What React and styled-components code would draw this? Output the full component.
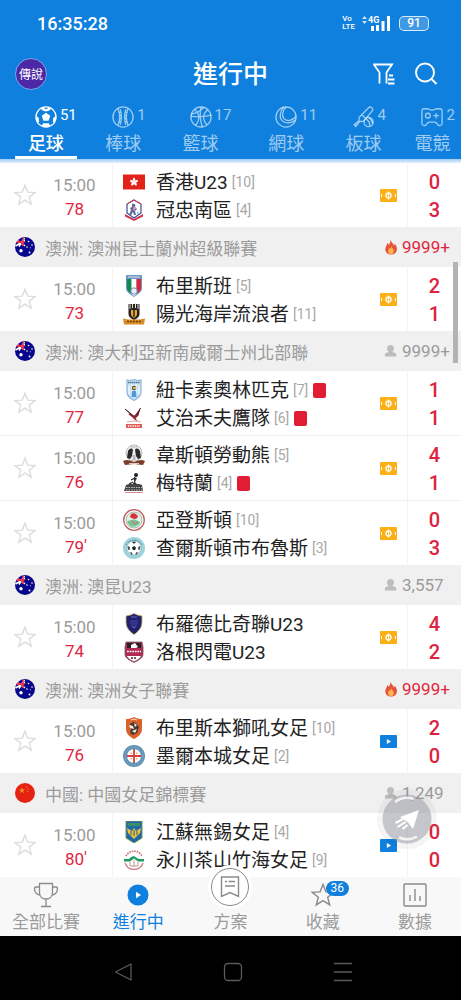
import React from "react";
import styled, { createGlobalStyle } from "styled-components";

const GlobalStyle = createGlobalStyle`
    * {
        box-sizing: border-box;
    }

    body {
        margin: 0;
        background: #fff;
        font-family: Roboto, "Noto Sans CJK TC", sans-serif;
    }

    a {
        color: inherit;
        text-decoration: none;
    }

    svg {
        display: block;
        flex: none;
    }
`;

/* ---------- data ---------- */

const sports = [
    { id: "soccer", label: "足球", count: 51, active: true },
    { id: "baseball", label: "棒球", count: 1 },
    { id: "basketball", label: "籃球", count: 17 },
    { id: "tennis", label: "網球", count: 11 },
    { id: "cricket", label: "板球", count: 4 },
    { id: "esports", label: "電競", count: 2 },
];

const sections = [
    {
        id: "hk",
        matches: [
            {
                minute: "78",
                home: { name: "香港U23", rank: 10, crest: "hongkong", goals: 0 },
                away: { name: "冠忠南區", rank: 4, crest: "southern", goals: 3 },
            },
        ],
    },
    {
        id: "qld",
        league: "澳洲: 澳洲昆士蘭州超級聯賽",
        flag: "au",
        viewers: "9999+",
        hot: true,
        matches: [
            {
                minute: "73",
                home: { name: "布里斯班", rank: 5, crest: "azzurri", goals: 2 },
                away: { name: "陽光海岸流浪者", rank: 11, crest: "wanderers", goals: 1 },
            },
        ],
    },
    {
        id: "nnsw",
        league: "澳洲: 澳大利亞新南威爾士州北部聯",
        flag: "au",
        viewers: "9999+",
        matches: [
            {
                minute: "77",
                home: { name: "紐卡素奧林匹克", rank: 7, crest: "olympic", goals: 1, red: true },
                away: { name: "艾治禾夫鷹隊", rank: 6, crest: "eagles", goals: 1, red: true },
            },
            {
                minute: "76",
                home: { name: "韋斯頓勞動熊", rank: 5, crest: "bears", goals: 4 },
                away: { name: "梅特蘭", rank: 4, crest: "maitland", goals: 1, red: true },
            },
            {
                minute: "79",
                tick: true,
                home: { name: "亞登斯頓", rank: 10, crest: "rosebud", goals: 0 },
                away: { name: "查爾斯頓市布魯斯", rank: 3, crest: "blues", goals: 3 },
            },
        ],
    },
    {
        id: "u23",
        league: "澳洲: 澳昆U23",
        flag: "au",
        viewers: "3,557",
        matches: [
            {
                minute: "74",
                home: { name: "布羅德比奇聯U23", crest: "broadbeach", goals: 4 },
                away: { name: "洛根閃電U23", crest: "logan", goals: 2 },
            },
        ],
    },
    {
        id: "aw",
        league: "澳洲: 澳洲女子聯賽",
        flag: "au",
        viewers: "9999+",
        hot: true,
        matches: [
            {
                minute: "76",
                live: true,
                home: { name: "布里斯本獅吼女足", rank: 10, crest: "roar", goals: 2 },
                away: { name: "墨爾本城女足", rank: 2, crest: "city", goals: 0 },
            },
        ],
    },
    {
        id: "cn",
        league: "中國: 中國女足錦標賽",
        flag: "cn",
        viewers: "1,249",
        matches: [
            {
                minute: "80",
                tick: true,
                live: true,
                home: { name: "江蘇無錫女足", rank: 4, crest: "wuxi", goals: 0 },
                away: { name: "永川茶山竹海女足", rank: 9, crest: "yongchuan", goals: 0 },
            },
        ],
    },
];

/* ---------- icons ---------- */

const STAR = "M12 2.2l2.7 6.9 7.3.4-5.7 4.6 1.9 7.1-6.2-4-6.2 4 1.9-7.1L2 9.5l7.3-.4z";

const sportIcons = {
    soccer: (
        <>
            <circle cx="12" cy="12" r="11" />
            <path
                d="M12 7.4l4.6 3.3-1.8 5.3H9.2l-1.8-5.3zM8.6 1.6L12 3.6l3.4-2 2 1-1.6 2.2-3.800 1.2-3.800-1.2-1.6-2.200zM1.2 10.500l2.800 2.300.4 4.600-2 .6zM22.800 10.500L20 12.800l-.4 4.600 2 .6zM9 18.700h6l1.800 2.800-3.200 1.400h-3.200l-3.200-1.400z"
                fill="currentColor"
                stroke="none"
            />
        </>
    ),
    baseball: (
        <>
            <circle cx="12" cy="12" r="11" />
            <path d="M6.5 3c2.600 5 2.600 13 0 18M17.500 3c-2.600 5-2.600 13 0 18M9 3.500c1.600 5.500 1.600 11.500 0 17M15 3.500c-1.600 5.500-1.600 11.500 0 17M6.800 7h3.600M7.400 10.300h3.200M7.400 13.700h3.200M6.800 17h3.600M13.600 7h3.600M13.400 10.300h3.200M13.400 13.700h3.200M13.600 17h3.600" />
        </>
    ),
    basketball: (
        <>
            <circle cx="12" cy="12" r="11" />
            <path d="M12 1c-1.200 6-1.200 15 1.500 22M1 11c7 1.500 14 1 22-1M5 3.700c5.600 4.300 6.400 11 1 17.600M19.500 4.200c-5.500 4-6.500 10.500-1 16.300M1.600 8.500c5-.5 10-2.500 13.400-7" />
        </>
    ),
    tennis: (
        <>
            <circle cx="12" cy="12" r="11" />
            <path d="M12.500 1C8 4.500 7 11 10 14c3.300 3.200 9 2 13-2.500M9.500 1.400C5 6 4.500 13 8 16.200c4 3.500 10 2.600 14-.6" />
        </>
    ),
    cricket: (
        <>
            <path d="M17.500 1.500c2-1.300 5 1.600 3.700 3.600L11.600 16.600l-4.300.3L3 22.300 1.200 20.600l5.200-4.500.6-4zM9.500 9.500l4.500 4.300M2.500 19l2 2" />
            <circle cx="17" cy="17.500" r="5" />
            <path d="M14.200 14c2.800 1.600 4.200 4.300 4.200 7.900M17 12.600c2.600 1.600 4.200 4 4.600 6.800" />
        </>
    ),
    esports: (
        <>
            <path d="M7 3c1.500 0 1.800 1.500 5 1.500S15.500 3 17 3h3.500c1.700 0 2.500 1 2.500 2.500v13c0 3.500-3.500 3.800-5 1.500-1-1.600-1.500-2.500-3-2.500H9c-1.500 0-2 .9-3 2.500-1.500 2.300-5 2-5-1.500v-13C1 4 1.800 3 3.500 3z" />
            <circle cx="7.5" cy="10.5" r="2.6" />
            <path d="M16.500 7.500v6M13.500 10.500h6" />
        </>
    ),
};

const SportIcon = ({ id }) => (
    <svg width="22" height="22" viewBox="0 0 24 24" fill="none" stroke="currentColor" strokeWidth="1.4">
        {sportIcons[id]}
    </svg>
);

const FilterIcon = () => (
    <svg width="22" height="24" viewBox="0 0 22 24" fill="none" stroke="#fff" strokeWidth="1.8">
        <path d="M6.500 21.500V10.500L1 2.500h18l-5.500 8v11" />
        <path d="M16 13.500h4M15 17.500h6.500M15 21.500h6.500" />
    </svg>
);

const SearchIcon = () => (
    <svg width="24" height="24" viewBox="0 0 24 24" fill="none" stroke="#fff" strokeWidth="1.9">
        <circle cx="11" cy="10.5" r="9" />
        <path d="M17.500 17l5 5" />
    </svg>
);

const SignalIcon = () => (
    <svg width="30" height="17" viewBox="0 0 30 17" fill="#fff">
        <path d="M0 4l2.500-3L5 4zM0 6l2.500 3L5 6z" opacity=".8" />
        <path d="M9 11h3v5H9zM14 10h3v6h-3zM19.500 6h3v10h-3zM25 1h3v15h-3z" />
        <text x="6" y="8" fontSize="9" fontWeight="700">4G</text>
    </svg>
);

const Flag = ({ code }) => (
    <svg width="20" height="20" viewBox="0 0 20 20">
        {code === "au" ? (
            <>
                <circle cx="10" cy="10" r="10" fill="#07078c" />
                <path d="M2.500 3.500L10 8.800M.5 9l9.500-5.500M4 9.500L9.500 1" stroke="#fff" strokeWidth="1.500" />
                <path d="M1.500 5.300l8.500-.5M8 .5V9M3 3.500l6 4.500" stroke="#e8304a" strokeWidth="1.500" />
                <g fill="#fff">
                    <circle cx="6" cy="13.800" r="1.700" />
                    <circle cx="13.500" cy="4.500" r=".8" />
                    <circle cx="17" cy="8" r=".8" />
                    <circle cx="12" cy="10" r=".8" />
                    <circle cx="14.500" cy="15.500" r=".9" />
                    <circle cx="15.500" cy="10.800" r=".5" />
                </g>
            </>
        ) : (
            <>
                <circle cx="10" cy="10" r="10" fill="#e62312" />
                <path d="M7 4.500l.8 2 2.100.1-1.700 1.300.6 2L7 8.800l-1.800 1.100.6-2L4.100 6.600l2.100-.1z" fill="#f2952b" />
                <g fill="#f2952b">
                    <circle cx="11.500" cy="4" r=".6" />
                    <circle cx="13" cy="6" r=".6" />
                    <circle cx="12.500" cy="8.600" r=".6" />
                </g>
            </>
        )}
    </svg>
);

const FlameIcon = () => (
    <svg width="14" height="16" viewBox="0 0 14 16">
        <path d="M6.500.5c.4 2.600 3.200 3.800 3.400 6.300.6-.5.900-1.200 1-2 1.600 2 2.100 3.900 2 5.700-.2 3-2.600 5-5.700 5s-5.800-1.900-5.900-5C1.200 7.700 3 6.600 3.300 4c.8.500 1.200 1.100 1.400 1.900C5.800 4.700 6.800 2.700 6.500.5z" fill="#e65339" />
        <path d="M7.200 7c.2 1.800 2.600 2.700 2.600 5.100 0 1.900-1.200 3.100-2.800 3.100s-2.900-1.200-2.900-2.900c0-1.600.9-2.200 1.100-3.500.6.300.8.700.9 1.300.6-.7 1-1.800 1.100-3.100z" fill="#fbb650" />
    </svg>
);

const PersonIcon = () => (
    <svg width="14" height="16" viewBox="0 0 14 16" fill="#bdbdbd">
        <path d="M6.500 2C8.600 2 10 3.500 10 5.500c0 1.600-.9 2.800-1.900 3.500 2.500.5 4.400 1.300 4.400 3.200 0 1-.5 1.300-1.500 1.300H2.200c-1 0-1.500-.4-1.500-1.300 0-1.900 1.800-2.700 4.200-3.200C3.900 8.300 3 7.100 3 5.500 3 3.500 4.400 2 6.500 2z" />
    </svg>
);

const StarIcon = () => (
    <svg width="24" height="24" viewBox="0 0 24 24" fill="none" stroke="#dcdcdc" strokeWidth="1.4">
        <path d={STAR} />
    </svg>
);

const PitchIcon = () => (
    <svg width="17" height="13" viewBox="0 0 17 13" fill="none" stroke="#fff">
        <rect width="17" height="13" rx="1" fill="#fbb116" stroke="none" />
        <circle cx="8.5" cy="6.5" r="2.5" strokeWidth="1.3" />
        <path d="M8.500 2.500v8" strokeWidth="1.2" />
        <path d="M1.500 5v3M15.500 5v3" strokeWidth="1" />
    </svg>
);

const LiveIcon = () => (
    <svg width="17" height="13" viewBox="0 0 17 13">
        <rect width="17" height="13" rx="1" fill="#0f80dd" />
        <path d="M6.800 4v5l4.200-2.500z" fill="#fff" />
    </svg>
);

const crests = {
    hongkong: (
        <>
            <path d="M0 3.500h22v15H0z" fill="#e2231a" />
            <g fill="#fff">
                <ellipse cx="11" cy="8.8" rx="1.2" ry="2" />
                <ellipse cx="11" cy="8.8" rx="1.2" ry="2" transform="rotate(72 11 11)" />
                <ellipse cx="11" cy="8.8" rx="1.2" ry="2" transform="rotate(144 11 11)" />
                <ellipse cx="11" cy="8.8" rx="1.2" ry="2" transform="rotate(216 11 11)" />
                <ellipse cx="11" cy="8.8" rx="1.2" ry="2" transform="rotate(288 11 11)" />
            </g>
        </>
    ),
    southern: (
        <>
            <path d="M11 1l7 4v9l-7 5-7-5V5z" fill="#fff" stroke="#3c4c93" strokeWidth="1.2" />
            <path d="M4 5l7-4 7 4" stroke="#d8385b" strokeWidth="1" />
            <path d="M2 15l9 5 9-5v2.500L11 22l-9-4.500z" fill="#cf3450" />
            <path d="M9 5c3-1 4 1 3 3l2 2-2 2 1 4h-2l-1-3-2 3H6l2-5-1-2 2-1z" fill="#5b679f" />
            <path d="M11 7l2 2-2 3-1-2z" fill="#e0a0b0" />
            <path d="M14 12l2 2-2 2z" fill="#8fc3e0" />
        </>
    ),
    azzurri: (
        <>
            <path d="M3 0h16v13c0 4-4 6-8 9-4-3-8-5-8-9z" fill="#6f97c4" />
            <path d="M4 4h4.500v14.500C6 17 4 15.500 4 13z" fill="#118a4b" />
            <path d="M8.500 4h5v15L11 21l-2.500-2z" fill="#fff" />
            <path d="M13.500 4H18v9c0 2.500-2 4-4.500 5.500z" fill="#d9263b" />
            <circle cx="11" cy="16" r="3.2" fill="#e8eef5" stroke="#6a8fb8" />
            <path d="M5 2h12" stroke="#d6e3f0" />
        </>
    ),
    wanderers: (
        <>
            <path d="M5.500 1h11v10c0 3-2.500 4.500-5.500 6-3-1.500-5.500-3-5.500-6z" fill="#222" />
            <path d="M7 1v5M9.500 1v4M12.500 0v5M15 1v5" stroke="#e9e2cc" strokeWidth="1" />
            <path d="M8 7h6v4c0 2-1.500 3-3 4-1.500-1-3-2-3-4z" fill="#eda331" />
            <path d="M11 7v7" stroke="#222" strokeWidth="1.4" />
            <path d="M0 15.500l5 1h12l5-1-1 6H1z" fill="#d98b25" />
            <path d="M4 18.500h14" stroke="#70420f" strokeWidth="1.5" strokeDasharray="2 1" />
        </>
    ),
    olympic: (
        <>
            <path d="M4 1c2 1 4 .5 7-.5 3 1 5 1.500 7 .5v12c0 4-3 6-7 8.500C7 19 4 17 4 13z" fill="#cbe1f4" stroke="#8fb6dc" strokeWidth="1.2" />
            <path d="M9 5v12M13 5v12M6 7v8M16 7v8" stroke="#fff" />
            <path d="M5 3.500h12" stroke="#4a6e96" strokeWidth="1.5" strokeDasharray="1.5 .5" />
            <circle cx="11" cy="9" r="2.3" fill="#4a5560" />
            <path d="M9 12h4l.5 6h-5z" fill="#4b9bd8" />
            <path d="M10 8h3v2h-3z" fill="#e5b43c" />
        </>
    ),
    eagles: (
        <>
            <path d="M2 2l8 6.500 2-.5 5.500-7-2 7.500-3 3 2.500 2.500-3-1-3-3-4-3 2 .3z" fill="#8d2430" />
            <path d="M2 2l8 6.500M17.500 1L14 8" stroke="#3c1418" />
            <path d="M4 15l7-1 7 1" stroke="#dfa7a7" />
            <path d="M3 17h16v4H3z" fill="#e45a5a" />
            <path d="M5 19h12" stroke="#fff" strokeWidth="1.3" strokeDasharray="1.3 1" />
        </>
    ),
    bears: (
        <>
            <circle cx="11" cy="9" r="8" fill="#f0f0f0" stroke="#aaa" strokeWidth=".8" />
            <path d="M5 7c2-3 4-3 5-1l-1 6-2 3-3-1zM17 7c-2-3-4-3-5-1l1 6 2 3 3-1z" fill="#2d2a2a" />
            <path d="M8 3h6" stroke="#999" strokeDasharray="1 .6" />
            <path d="M9.500 11h3v5h-3z" fill="#bbb" />
            <path d="M0 17c4-2 6-1 11 1 5-2 7-3 11-1l-2 4-9-1-9 1z" fill="#7b3c2b" />
            <path d="M6 19.500h10" stroke="#d9c8bd" />
        </>
    ),
    maitland: (
        <>
            <circle cx="13" cy="3" r="2" fill="#222" />
            <path d="M11 5l3 1-2 4 3 3H9l2-3z" fill="#333" />
            <path d="M8 8l4-2M6 12l4-2" stroke="#222" strokeWidth="1.3" />
            <path d="M3 13l3-1h10l3 1 1 6H1z" fill="#444" />
            <path d="M3 15.500h16M3 18h16" stroke="#ddd" strokeWidth=".8" strokeDasharray="1.5 1" />
            <path d="M2 20.500h18" stroke="#d88f8f" />
        </>
    ),
    rosebud: (
        <>
            <circle cx="11" cy="11" r="10.3" fill="#fff" stroke="#c65b61" strokeWidth="1.3" />
            <circle cx="11" cy="11" r="8" fill="#dff0e4" stroke="#78a78a" strokeWidth=".7" />
            <path d="M8 5c3-2 6 0 7 3-2 3-6 2-8 0z" fill="#d8323e" />
            <path d="M4 13c3-3 5-1 7-3 2 2 5 1 6 4-2 4-9 5-11 2z" fill="#7ec29a" />
            <path d="M9 12l3 3 3-2" stroke="#d8606a" />
        </>
    ),
    blues: (
        <>
            <circle cx="11" cy="11" r="11" fill="#9ed3dc" />
            <circle cx="11" cy="11" r="7" fill="#fff" stroke="#8fb0b8" strokeWidth=".6" />
            <path d="M11 9l2 1.500-.8 2.500H9.800L9 10.500z" fill="#1d2529" />
            <path d="M9.500 5h3L11 6.500zM5 9.500l1.500 1L6 13zM17 9.500l-1.500 1 .5 2.500zM7.500 15.500l1.500.5v1.500zM14.500 15.500L13 16v1.500z" fill="#1d2529" stroke="#1d2529" strokeWidth=".6" />
            <path d="M3 8a9 9 0 0 1 16 0" stroke="#45727d" strokeDasharray="1.500 1" />
        </>
    ),
    broadbeach: (
        <>
            <path d="M11 .5l3.500 1.500L19 3v6c0 6-4 10-8 12.500C7 19 3 15 3 9V3l4.500-1z" fill="#22206c" stroke="#c3b35c" strokeWidth=".8" />
            <path d="M8 4h6M8.500 13l2.500 2 2.500-2" stroke="#6868b0" />
            <path d="M7 7h8v4l-4 3-4-3z" fill="#34328a" />
        </>
    ),
    logan: (
        <>
            <path d="M3 1h16l1 5v7c0 4-4 6-9 8.500C6 19 2 17 2 13V6z" fill="#b02a53" stroke="#6d5560" strokeWidth=".8" />
            <path d="M4 2h14v5H4z" fill="#2b2025" />
            <path d="M8 4l4-2 3 4-2 1H8z" fill="#fff" />
            <path d="M4 10.500h14" stroke="#fff" strokeWidth="1.6" strokeDasharray="1.8 .8" />
            <path d="M4 15h14c-1 2.500-4 4-7 5.500C8 19 5 17.500 4 15z" fill="#fff" />
            <path d="M8 17h6" stroke="#4b2430" strokeWidth="1.3" strokeDasharray="2 1" />
        </>
    ),
    roar: (
        <>
            <path d="M11 0c3 1.500 5 2 8 2v10c0 5-4 8-8 10-4-2-8-5-8-10V2c3 0 5-.5 8-2z" fill="#d9622b" />
            <path d="M7 7l3-2 3 1 3 4-2 6-4 2-3-2 1-4z" fill="#4a3833" />
            <path d="M6 8l4 1 1 3-4-1zM11 6l3 2-2 2zM9 14l5-2-2 4z" fill="#f5ede8" />
            <path d="M8 3l3-1 3 1" stroke="#f5d8c7" />
        </>
    ),
    city: (
        <>
            <circle cx="11" cy="11" r="11" fill="#5e93b8" />
            <circle cx="11" cy="11" r="9" stroke="#96b8d0" strokeDasharray="1.500 1.500" />
            <circle cx="11" cy="11" r="7" fill="#fff" />
            <path d="M11 4v14M4 11h14" stroke="#de3b3c" strokeWidth="1.8" />
            <path d="M7.500 7.500h1.500V9H7.500zM13 7.500h1.500V9H13zM7.500 13h1.500v1.500H7.500zM13 13h1.500v1.500H13z" fill="#dfb565" />
        </>
    ),
    wuxi: (
        <>
            <path d="M3 0h16v17l-8 5-8-5z" fill="#1f68a8" stroke="#6d9855" strokeWidth="1" />
            <path d="M5 2h12v3H5z" fill="#3c8d6a" />
            <path d="M4 7l5 3 2-3 2 3 5-3-1 5-4 4-2 2-2-2-4-4z" fill="#e9c23d" />
            <path d="M8 10v4M11 9v6M14 10v4" stroke="#2c6088" />
        </>
    ),
    yongchuan: (
        <>
            <circle cx="11" cy="11" r="10" fill="#fff" />
            <path d="M3 7a9 9 0 0 1 16 0" stroke="#cc5b62" strokeWidth="1.5" strokeDasharray="1.500 1" />
            <path d="M1 10h5l2-2 3-1 3 2 2 1h5v2.500h-6l-4-3-4 3H1z" fill="#239b63" />
            <path d="M2 14a9.500 9.500 0 0 0 18 0" stroke="#c5777b" strokeWidth="1.2" />
            <path d="M7 13v4h8v-4M11 11v6" stroke="#b9918a" />
        </>
    ),
};

const Crest = ({ id }) => (
    <svg width="22" height="22" viewBox="0 0 22 22" fill="none">
        {crests[id]}
    </svg>
);

/* ---------- header ---------- */

const Header = () => (
    <HeaderContainer>
        <StatusBar>
            <Clock>16:35:28</Clock>
            <StatusIcons>
                <VoLte>
                    <span>Vo</span>
                    <span>LTE</span>
                </VoLte>
                <SignalIcon />
                <Battery>91</Battery>
            </StatusIcons>
        </StatusBar>
        <TitleBar>
            <Avatar type="button">傳說</Avatar>
            <Title>進行中</Title>
            <TitleActions>
                <PlainButton type="button" aria-label="篩選">
                    <FilterIcon />
                </PlainButton>
                <PlainButton type="button" aria-label="搜尋">
                    <SearchIcon />
                </PlainButton>
            </TitleActions>
        </TitleBar>
        <SportTabs>
            {sports.map((sport) => (
                <SportTab key={sport.id} type="button" $active={sport.active}>
                    <SportTabTop>
                        <SportIcon id={sport.id} />
                        <SportCount>{sport.count}</SportCount>
                    </SportTabTop>
                    <SportLabel>{sport.label}</SportLabel>
                </SportTab>
            ))}
        </SportTabs>
    </HeaderContainer>
);

/* ---------- match list ---------- */

const LeagueHeader = ({ league, flag, viewers, hot }) => (
    <LeagueBar>
        <Flag code={flag} />
        <LeagueName>{league}</LeagueName>
        <Viewers $hot={hot}>
            {hot ? <FlameIcon /> : <PersonIcon />}
            {viewers}
        </Viewers>
    </LeagueBar>
);

const Team = ({ name, rank, crest, red }) => (
    <TeamLine>
        <Crest id={crest} />
        <TeamName>{name}</TeamName>
        {rank && <Rank>[{rank}]</Rank>}
        {red && <RedCard />}
    </TeamLine>
);

const MatchRow = ({ minute, tick, live, home, away }) => (
    <MatchContainer>
        <MatchStart>
            <FavouriteButton type="button" aria-label="收藏">
                <StarIcon />
            </FavouriteButton>
            <Times>
                <Kickoff>15:00</Kickoff>
                <Minute>
                    {minute}
                    {tick && <Tick>'</Tick>}
                </Minute>
            </Times>
        </MatchStart>
        <Teams>
            <Team {...home} />
            <Team {...away} />
        </Teams>
        <VideoButton type="button" aria-label="直播">
            {live ? <LiveIcon /> : <PitchIcon />}
        </VideoButton>
        <Scores>
            <span>{home.goals}</span>
            <span>{away.goals}</span>
        </Scores>
    </MatchContainer>
);

/* ---------- bottom navigation ---------- */

const BottomNav = () => (
    <NavBar>
        <NavItem href="#all">
            <NavIcon>
                <svg width="26" height="26" viewBox="0 0 26 26" fill="none" stroke="#8a8a8a" strokeWidth="1.3">
                    <path d="M6.500 1.500h13v9c0 4-2.700 6.500-6.500 6.500s-6.500-2.500-6.500-6.500zM6.500 5H3c-1.200 0-1.500.5-1.500 1.500C1.500 10 3 12.500 7 13M19.500 5H23c1.200 0 1.500.5 1.500 1.500 0 3.500-1.500 6-5.500 6.500M13 17v7.500M8 24.500h10" />
                </svg>
            </NavIcon>
            全部比賽
        </NavItem>
        <NavItem href="#live" $active>
            <NavIcon>
                <svg width="22" height="22" viewBox="0 0 22 22">
                    <circle cx="11" cy="11" r="10.5" fill="#0f80dd" />
                    <path d="M9 7.700v6.600l5-3.300z" fill="#fff" />
                </svg>
            </NavIcon>
            進行中
        </NavItem>
        <NavItem href="#plans">
            <NavIcon>
                <RaisedIcon>
                    <svg width="20" height="24" viewBox="0 0 20 24" fill="none" stroke="#8a8a8a" strokeWidth="1.4">
                        <path d="M1.500 2h17v19.500L10 17.500l-8.500 4zM5 6.500h2M8.500 6.500H15M5 11h10" />
                    </svg>
                </RaisedIcon>
            </NavIcon>
            方案
        </NavItem>
        <NavItem href="#favourites">
            <NavIcon>
                <svg width="26" height="26" viewBox="0 0 24 24" fill="none" stroke="#8a8a8a" strokeWidth="1.3">
                    <path d={STAR} />
                </svg>
                <Badge>36</Badge>
            </NavIcon>
            收藏
        </NavItem>
        <NavItem href="#stats">
            <NavIcon>
                <svg width="24" height="24" viewBox="0 0 24 24" fill="none" stroke="#8a8a8a" strokeWidth="1.4">
                    <rect x="1" y="1" width="22" height="22" rx="1" />
                    <path d="M7 12v6M12 6v12M17 13v5" />
                </svg>
            </NavIcon>
            數據
        </NavItem>
    </NavBar>
);

const SystemBar = () => (
    <SystemBarContainer>
        <PlainButton type="button" aria-label="返回">
            <svg width="20" height="20" viewBox="0 0 20 20" fill="none" stroke="#5a5a5a" strokeWidth="1.3">
                <path d="M18 2v16L2.500 10z" strokeLinejoin="round" />
            </svg>
        </PlainButton>
        <PlainButton type="button" aria-label="主畫面">
            <svg width="20" height="20" viewBox="0 0 20 20" fill="none" stroke="#5a5a5a" strokeWidth="1.3">
                <rect x="1.5" y="1.5" width="17" height="17" rx="3.5" />
            </svg>
        </PlainButton>
        <PlainButton type="button" aria-label="最近使用">
            <svg width="20" height="20" viewBox="0 0 20 20" fill="none" stroke="#5a5a5a" strokeWidth="1.4">
                <path d="M1 1.500h18M1 10h18M1 18.500h18" />
            </svg>
        </PlainButton>
    </SystemBarContainer>
);

const App = () => {
    return (
        <Screen>
            <GlobalStyle />
            <Header />
            <MatchList>
                {sections.map((section) => (
                    <section key={section.id}>
                        {section.league && <LeagueHeader {...section} />}
                        {section.matches.map((match) => (
                            <MatchRow key={match.home.name} {...match} />
                        ))}
                    </section>
                ))}
                <ScrollThumb />
                <ShareButton type="button" aria-label="分享">
                    <svg width="60" height="60" viewBox="0 0 60 60">
                        <circle cx="30" cy="30" r="30" fill="rgba(0, 0, 0, 0.04)" />
                        <circle cx="30" cy="30" r="24.5" fill="rgba(150, 152, 162, 0.5)" />
                        <path d="M18 13a21 21 0 0 1 19-3M22 48.500a20.500 20.500 0 0 0 18-1" fill="none" stroke="#fff" strokeWidth="2.5" opacity=".8" />
                        <path d="M42 21l-6 19-5-6.500-8-5.500z" fill="#fff" />
                        <path d="M18.500 34l7.500-4M20.500 38l8-5M25.500 40l5-4" stroke="#fff" strokeWidth="2" />
                    </svg>
                </ShareButton>
            </MatchList>
            <BottomNav />
            <SystemBar />
        </Screen>
    );
}

export default App;

const Screen = styled.div`
    display: flex;
    flex-direction: column;
    height: 100vh;
    overflow: hidden;
`;

const PlainButton = styled.button`
    padding: 0;
    border: 0;
    background: none;
    color: inherit;
    font: inherit;
    cursor: pointer;
`;

const HeaderContainer = styled.header`
    background: #0f80dd;
    color: #fff;
`;

const StatusBar = styled.div`
    display: flex;
    align-items: center;
    justify-content: space-between;
    height: 46px;
    padding: 0 32px 0 37px;
`;

const Clock = styled.span`
    font-size: 18px;
    font-weight: 500;
`;

const StatusIcons = styled.div`
    display: flex;
    align-items: center;
    gap: 7px;
`;

const VoLte = styled.span`
    display: flex;
    flex-direction: column;
    font-size: 8px;
    font-weight: 500;
    line-height: 8px;
`;

const Battery = styled.span`
    width: 30px;
    border: 1px solid rgba(255, 255, 255, 0.8);
    border-radius: 5px;
    background: rgba(255, 255, 255, 0.2);
    font-size: 12px;
    font-weight: 500;
    line-height: 13px;
    text-align: center;
`;

const TitleBar = styled.div`
    display: grid;
    grid-template-columns: 1fr auto 1fr;
    align-items: center;
    height: 55px;
    padding: 0 15px;
`;

const Avatar = styled(PlainButton)`
    width: 32px;
    height: 32px;
    border: 1px solid #7aa5ee;
    border-radius: 50%;
    background: #4c27a6;
    font-size: 12px;
    white-space: nowrap;
`;

const Title = styled.h1`
    margin: 0;
    padding-top: 3px;
    font-size: 25px;
    font-weight: 500;
    line-height: 36px;
`;

const TitleActions = styled.div`
    display: flex;
    justify-content: flex-end;
    gap: 19px;
    padding-right: 8px;
`;

const SportTabs = styled.nav`
    display: flex;
    padding: 5px 0 0 3px;
    overflow: hidden;
`;

const SportTab = styled(PlainButton)`
    flex: none;
    margin: 0 12px;
    border-bottom: 3px solid ${({ $active }) => ($active ? "#fff" : "transparent")};
    color: ${({ $active }) => ($active ? "#fff" : "rgba(255, 255, 255, 0.6)")};
    font-weight: ${({ $active }) => ($active ? 500 : 400)};
`;

const SportTabTop = styled.span`
    display: grid;
    grid-template-columns: 1fr auto 1fr;
    height: 22px;

    svg {
        grid-column: 2;
    }
`;

const SportCount = styled.span`
    grid-column: 3;
    padding-left: 3px;
    font-size: 15px;
    font-weight: 400;
    line-height: 18px;
    text-align: left;
`;

const SportLabel = styled.span`
    display: block;
    margin-top: 4px;
    font-size: 18px;
    line-height: 24px;
`;

const MatchList = styled.main`
    position: relative;
    flex: 1;
    min-height: 0;
    overflow: hidden;

    &::before {
        content: "";
        display: block;
        height: 4px;
        background: linear-gradient(#9fcaf3, #e6f2fd);
    }
`;

const LeagueBar = styled.h2`
    display: flex;
    align-items: center;
    gap: 10px;
    height: 40px;
    margin: 0;
    padding-left: 15px;
    background: #f0f0f0;
    color: #9b9b9b;
    font-size: 17px;
    font-weight: 400;
`;

const LeagueName = styled.span`
    flex: 1;
    white-space: nowrap;
`;

const Viewers = styled.span`
    display: flex;
    align-items: center;
    gap: 4px;
    width: 77px;
    color: ${({ $hot }) => ($hot ? "#e0263f" : "#9b9b9b")};
`;

const MatchContainer = styled.article`
    display: flex;
    height: 64px;
    background: #fff;

    & + & {
        height: 65px;
        border-top: 1px solid #f0f0f0;
    }
`;

const MatchStart = styled.div`
    display: flex;
    width: 113px;
    border-right: 1px solid #f3f3f3;
`;

const FavouriteButton = styled(PlainButton)`
    display: flex;
    align-items: center;
    justify-content: center;
    width: 49px;
`;

const Times = styled.div`
    width: 51px;
    padding-top: 10px;
    font-size: 17px;
    line-height: 24px;
    text-align: center;
`;

const Kickoff = styled.div`
    color: #9b9b9b;
`;

const Minute = styled.div`
    position: relative;
    color: #e0263f;
`;

const Tick = styled.span`
    position: absolute;
    top: -2px;
`;

const Teams = styled.div`
    flex: 1;
    min-width: 0;
    padding: 5px 0 0 10px;
`;

const TeamLine = styled.div`
    display: flex;
    align-items: center;
    height: 28px;
    white-space: nowrap;
`;

const TeamName = styled.span`
    margin-left: 11px;
    padding-top: 2px;
    color: #222;
    font-size: 19px;
    line-height: 28px;
`;

const Rank = styled.span`
    margin-left: 4px;
    color: #a8a8a8;
    font-size: 14px;
    line-height: 28px;
`;

const RedCard = styled.i`
    width: 13px;
    height: 15px;
    margin-left: 5px;
    border-radius: 2px;
    background: #e11d33;
`;

const VideoButton = styled(PlainButton)`
    display: flex;
    align-items: center;
    width: 27px;
    margin-right: 0;
`;

const Scores = styled.div`
    display: flex;
    flex-direction: column;
    width: 54px;
    padding-top: 5px;
    border-left: 1px solid #f3f3f3;
    color: #dc2440;
    font-size: 20px;
    font-weight: 500;
    line-height: 28px;
    text-align: center;
`;

const ScrollThumb = styled.div`
    position: absolute;
    top: 103px;
    right: 3px;
    width: 5px;
    height: 101px;
    background: #b3b3b3;
`;

const ShareButton = styled(PlainButton)`
    position: absolute;
    right: 24px;
    bottom: 28px;
`;

const NavBar = styled.nav`
    position: relative;
    display: grid;
    grid-template-columns: repeat(5, 1fr);
    height: 59px;
    background: #f8f8f8;
`;

const NavItem = styled.a`
    display: flex;
    flex-direction: column;
    align-items: center;
    padding-top: 4px;
    color: ${({ $active }) => ($active ? "#0f80dd" : "#9b9b9b")};
    font-size: 17px;
    line-height: 28px;
`;

const NavIcon = styled.span`
    position: relative;
    display: flex;
    align-items: center;
    justify-content: center;
    width: 38px;
    height: 27px;
`;

const RaisedIcon = styled.span`
    position: absolute;
    bottom: 2px;
    display: flex;
    align-items: center;
    justify-content: center;
    width: 38px;
    height: 38px;
    border: 1px solid #8a8a8a;
    border-radius: 50%;
    background: #fff;
    box-shadow: 0 0 0 3px #fff;
`;

const Badge = styled.span`
    position: absolute;
    top: 0;
    left: 22px;
    width: 23px;
    border-radius: 8px;
    background: #0f80dd;
    color: #fff;
    font-size: 12px;
    line-height: 15px;
    text-align: center;
`;

const SystemBarContainer = styled.footer`
    display: flex;
    align-items: center;
    justify-content: center;
    gap: 90px;
    height: 64px;
    padding: 8px 0 0 5px;
    background: #000;
`;
